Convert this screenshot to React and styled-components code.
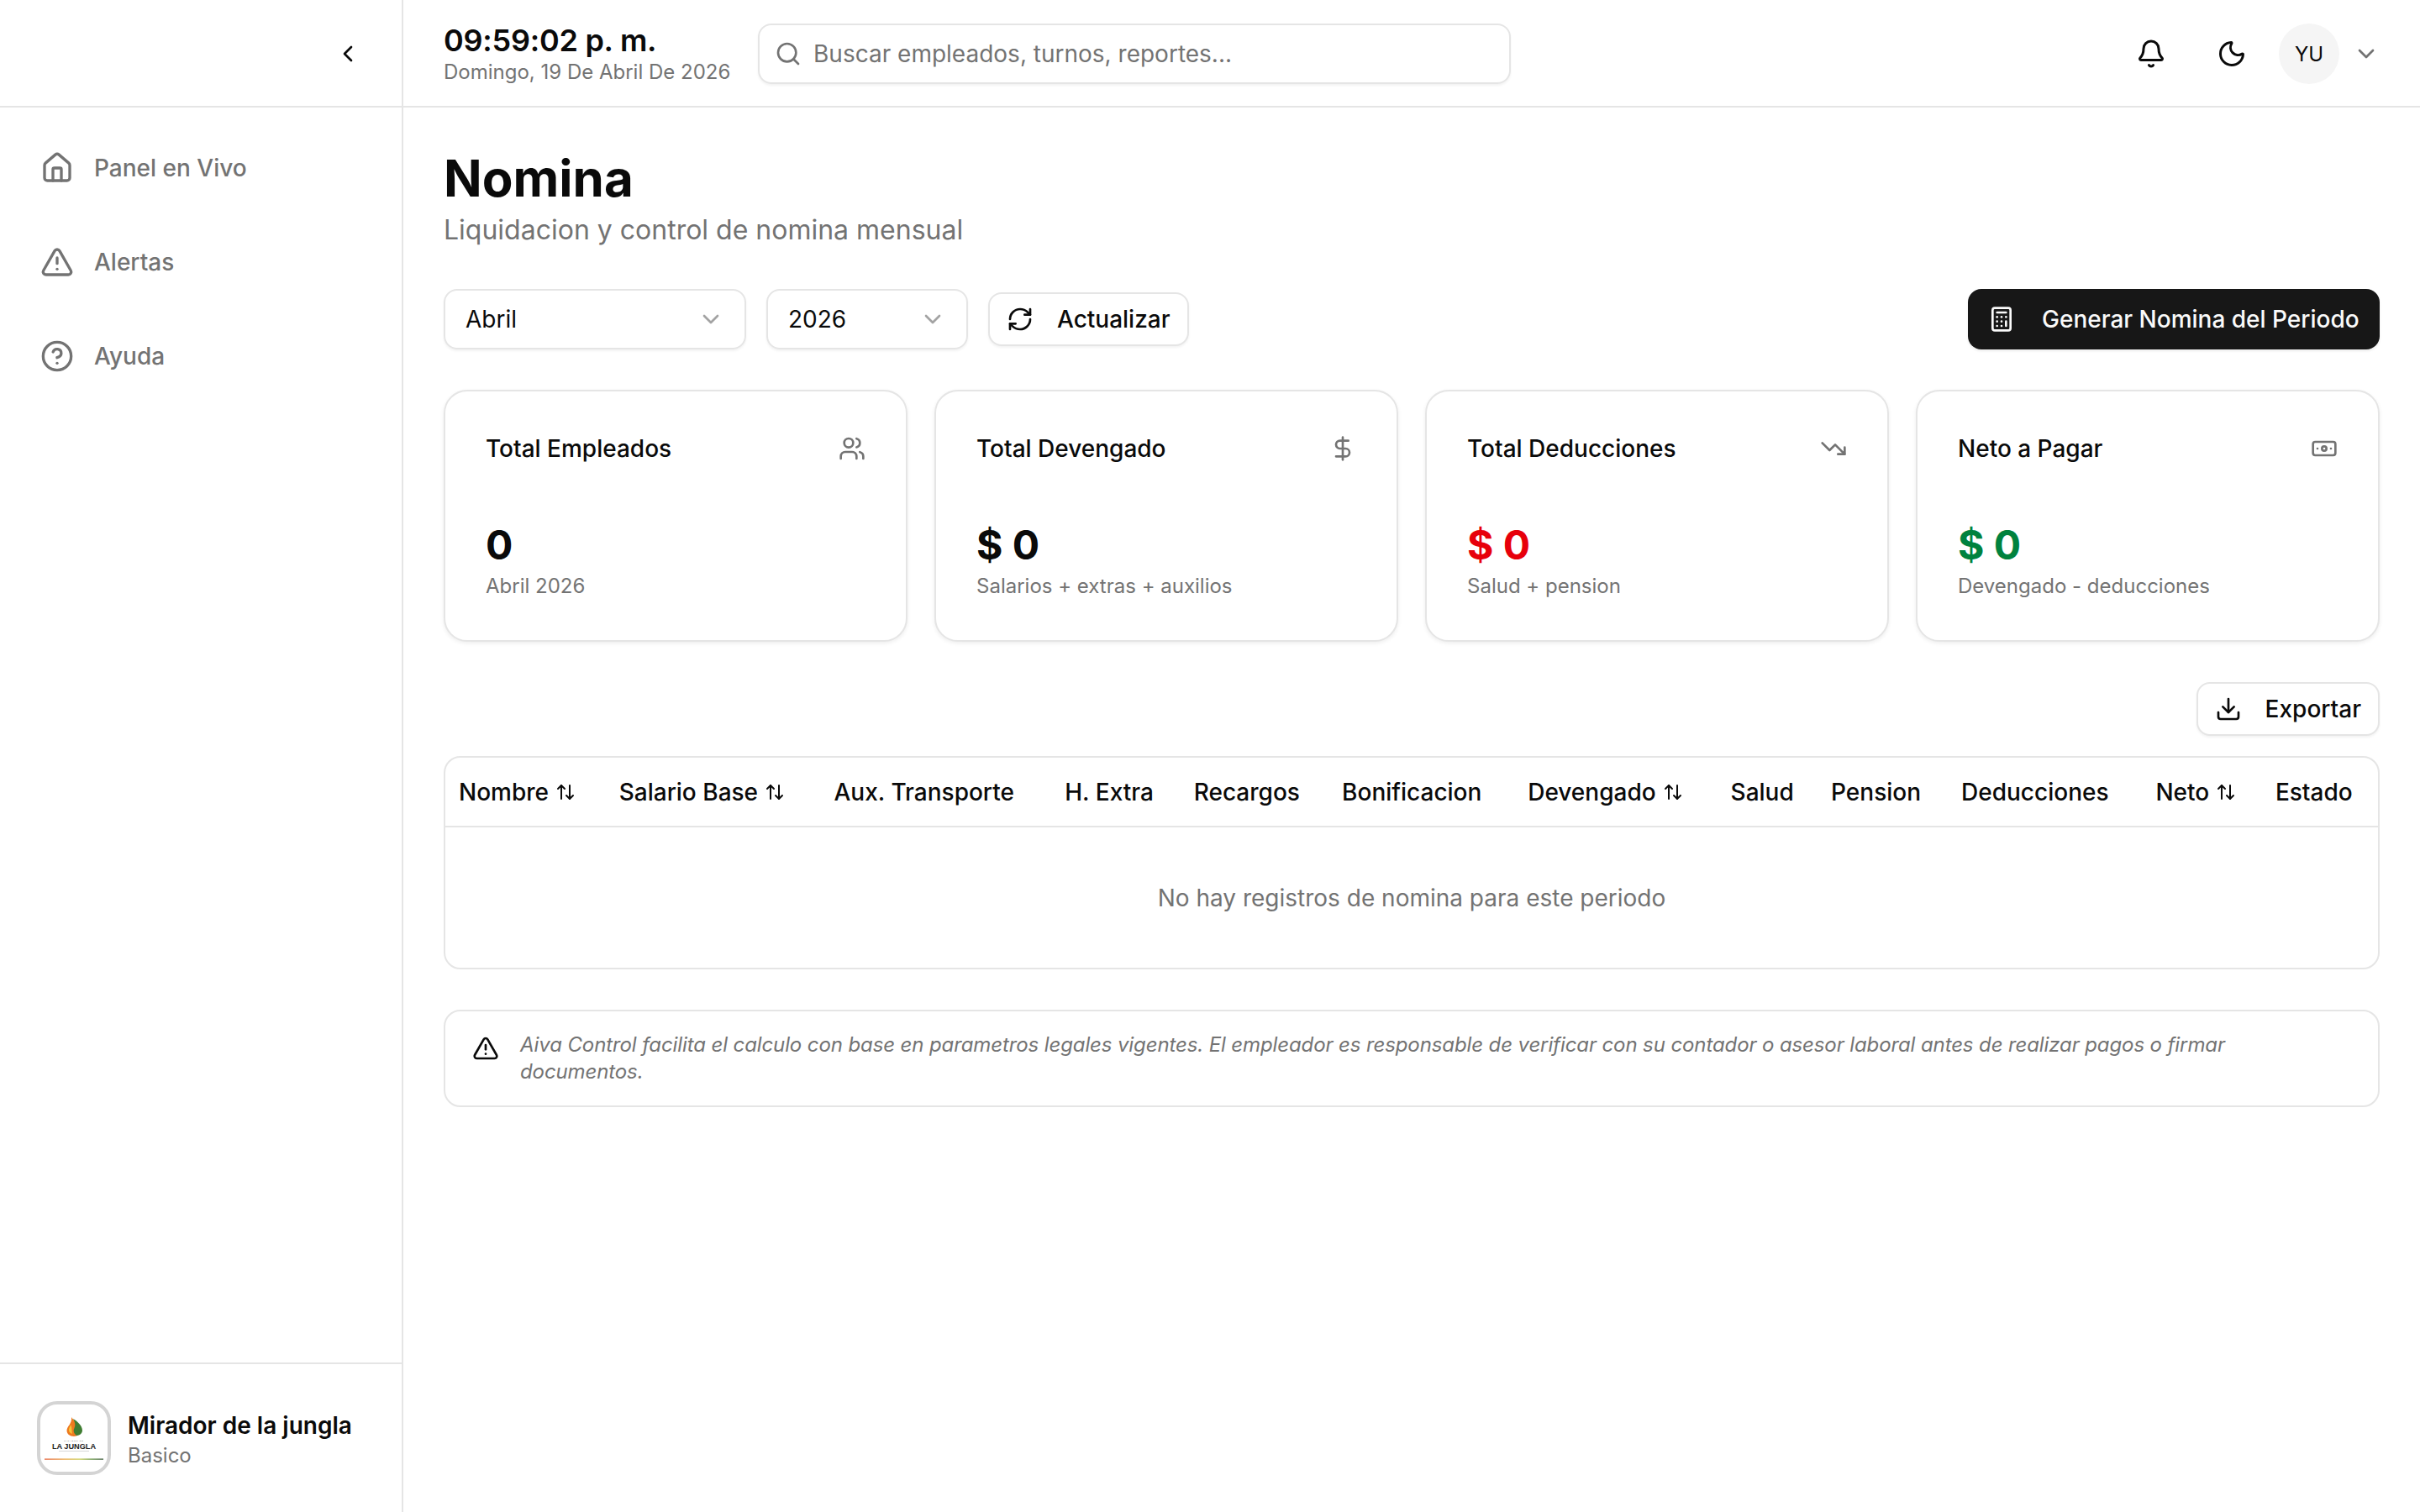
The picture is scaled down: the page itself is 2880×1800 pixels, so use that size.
import React from "react";
import styled, { createGlobalStyle } from "styled-components";
import {
  ArrowUpDown, Banknote, Bell, Calculator, ChevronDown, ChevronLeft, CircleHelp, DollarSign, Download,
  House, Moon, RefreshCw, Search, TrendingDown, TriangleAlert, Users,
} from "lucide-react";

const Global = createGlobalStyle`
  * { box-sizing: border-box; }
  html, body { margin: 0; padding: 0; background: #fff; }
  body { font-family: Inter, "Liberation Sans", sans-serif; color: #0a0a0a; }
`;

const Shell = styled.div`display: flex; width: 2880px; height: 1800px; overflow: hidden; background: #fff;`;
const Sidebar = styled.aside`width: 480px; flex: none; display: flex; flex-direction: column; border-right: 2px solid #e5e5e5;`;
const SideTop = styled.div`height: 128px; flex: none; display: flex; align-items: center; justify-content: flex-end; padding: 2px 48px 0 0; border-bottom: 2px solid #e5e5e5;`;
const Nav = styled.nav`flex: 1; display: flex; flex-direction: column; gap: 32px; padding: 32px 48px;`;
const NavItem = styled.a`display: flex; align-items: center; gap: 24px; height: 80px; color: #737373; font-size: 28px; font-weight: 500;`;
const SideFoot = styled.div`height: 178px; flex: none; display: flex; align-items: center; gap: 20px; padding: 0 44px; border-top: 2px solid #e5e5e5;`;
const LogoBox = styled.div`width: 88px; height: 88px; flex: none; border: 4px solid #d4d4d4; border-radius: 24px; background: #fff; display: flex; overflow: hidden;`;
const OrgText = styled.div`margin-top: 4px;`;
const OrgName = styled.div`font-size: 28px; line-height: 36px; font-weight: 600; white-space: nowrap;`;
const OrgPlan = styled.div`font-size: 24px; line-height: 32px; color: #737373; margin-top: 2px;`;

const Main = styled.div`flex: 1; min-width: 0; display: flex; flex-direction: column;`;
const TopBar = styled.header`height: 128px; flex: none; display: flex; align-items: center; gap: 32px; padding: 2px 48px 0; border-bottom: 2px solid #e5e5e5;`;
const Clock = styled.div`width: 342px; flex: none;`;
const ClockTime = styled.div`font-size: 36px; line-height: 44px; font-weight: 600; letter-spacing: -0.25px; margin-top: -1px;`;
const ClockDate = styled.div`font-size: 24px; line-height: 32px; color: #737373; white-space: nowrap;`;
const SearchBox = styled.div`width: 896px; height: 72px; display: flex; align-items: center; gap: 14px; padding: 0 18px; border: 2px solid #e5e5e5; border-radius: 16px; box-shadow: 0 2px 3px rgba(0,0,0,.05); color: #737373; font-size: 28px;`;
const TopRight = styled.div`margin-left: auto; display: flex; align-items: center;`;
const IconBtn = styled.button`width: 72px; height: 72px; margin-right: ${(p) => p.$mr}px; border: 0; padding: 0; background: none; color: #0a0a0a; display: flex; align-items: center; justify-content: center;`;
const Avatar = styled.div`width: 72px; height: 72px; border-radius: 50%; background: #f5f5f5; display: flex; align-items: center; justify-content: center; font-size: 24px; margin-right: 16px;`;

const Content = styled.main`padding: 48px; display: flex; flex-direction: column;`;
const Title = styled.h1`margin: 0; font-size: 60px; line-height: 72px; font-weight: 700;`;
const Subtitle = styled.p`margin: 0; padding-top: 4px; font-size: 32px; line-height: 44px; color: #737373;`;
const Controls = styled.div`margin-top: 48px; height: 72px; display: flex; align-items: center; gap: 24px;`;
const SelectBox = styled.div`width: ${(p) => p.$w}px; height: 72px; display: flex; align-items: center; justify-content: space-between; padding: 0 24px; border: 2px solid #e5e5e5; border-radius: 16px; box-shadow: 0 2px 3px rgba(0,0,0,.05); font-size: 28px; color: #a3a3a3;`;
const SelectValue = styled.span`color: #0a0a0a;`;
const OutlineBtn = styled.button`height: 64px; display: flex; align-items: center; gap: 28px; padding: 0 20px; border: 2px solid #e5e5e5; border-radius: 16px; background: #fff; box-shadow: 0 2px 3px rgba(0,0,0,.05); font: 500 28px Inter, sans-serif; color: #0a0a0a;`;
const PrimaryBtn = styled.button`margin-left: auto; height: 72px; width: 490px; display: flex; align-items: center; gap: 32px; padding: 0 24px; border: 0; border-radius: 16px; background: #171717; color: #fafafa; box-shadow: 0 2px 3px rgba(0,0,0,.08); font: 500 28px Inter, sans-serif; white-space: nowrap;`;

const Cards = styled.section`margin-top: 48px; display: grid; grid-template-columns: repeat(4, 1fr); gap: 32px;`;
const Card = styled.article`height: 300px; padding: 48px; border: 2px solid #e5e5e5; border-radius: 28px; background: #fff; box-shadow: 0 2px 5px rgba(0,0,0,.07);`;
const CardHead = styled.div`height: 40px; display: flex; align-items: center; justify-content: space-between; color: #737373;`;
const CardTitle = styled.span`font-size: 28px; font-weight: 500; color: #0a0a0a;`;
const CardValue = styled.div`margin-top: 63px; font-size: 48px; line-height: 64px; font-weight: 700; color: ${(p) => p.$c};`;
const CardSub = styled.div`margin-top: 1px; font-size: 24px; line-height: 32px; color: #737373;`;

const ExportRow = styled.div`margin-top: 48px; display: flex; justify-content: flex-end;`;
const TableWrap = styled.div`margin-top: 24px; border: 2px solid #e5e5e5; border-radius: 20px; overflow: hidden;`;
const Table = styled.table`width: 100%; border-collapse: collapse;`;
const Th = styled.th`height: 82px; padding: 0 16px; text-align: left; white-space: nowrap; font-size: 28px; font-weight: 500; color: #0a0a0a; border-bottom: 2px solid #e5e5e5;`;
const SortLabel = styled.span`display: inline-flex; align-items: center; gap: 8px;`;
const Empty = styled.td`height: 168px; text-align: center; font-size: 28px; color: #737373;`;
const Notice = styled.aside`margin-top: 48px; display: flex; gap: 25px; padding: 24px 32px; border: 2px solid #e5e5e5; border-radius: 20px; background: #fff; color: #0a0a0a;`;
const NoticeIcon = styled.span`flex: none; margin-top: 4px; height: 32px;`;
const NoticeText = styled.p`margin: 0; font-size: 24px; line-height: 32px; font-style: italic; letter-spacing: -0.11px; color: #737373;`;

const Logo = () => (
  <svg viewBox="0 0 80 80" width="80" height="80" role="img" aria-label="Mirador de la Jungla">
    <defs>
      <linearGradient id="ln" x1="0" x2="1">
        <stop offset="0" stopColor="#e4572e" /><stop offset=".35" stopColor="#e8a23a" /><stop offset=".6" stopColor="#c5c94a" /><stop offset=".8" stopColor="#5f8f3c" /><stop offset="1" stopColor="#2e4d2e" />
      </linearGradient>
    </defs>
    <path d="M37 15C39 19 47 22 48 30C48.5 35 44 38 40 38C35 38 31.5 35 31.5 31C31.5 26 38 23 37 15Z" fill="#ee7a1f" />
    <path d="M39 17C44 20 50 25 50 31C50 34 47 37 43 37C39.5 34 39 31 40.5 28C42 25 41.5 21 39 17Z" fill="#3f7d32" />
    <path d="M36 24C38 27 37 31 38 35C35 34 33.5 32 34 29.5C34.5 27 36 26 36 24Z" fill="#f6c63a" />
    <text x="40" y="43.5" textAnchor="middle" fontFamily="'Liberation Sans', sans-serif" fontSize="2.4" letterSpacing="0.8" fill="#555">MIRADOR DE</text>
    <text x="40" y="52.5" textAnchor="middle" fontFamily="'Liberation Sans', sans-serif" fontWeight="700" fontSize="9.2" fill="#222">LA JUNGLA</text>
    <rect x="22" y="55" width="36" height="0.6" fill="#bbb" />
    <rect x="5" y="64.5" width="70" height="1.2" fill="url(#ln)" />
  </svg>
);

const columns = [
  ["Nombre", true], ["Salario Base", true], ["Aux. Transporte"], ["H. Extra"], ["Recargos"], ["Bonificacion"],
  ["Devengado", true], ["Salud"], ["Pension"], ["Deducciones"], ["Neto", true], ["Estado"],
];

const cards = [
  { title: "Total Empleados", Icon: Users, value: "0", sub: "Abril 2026", c: "#0a0a0a" },
  { title: "Total Devengado", Icon: DollarSign, value: "$ 0", sub: "Salarios + extras + auxilios", c: "#0a0a0a" },
  { title: "Total Deducciones", Icon: TrendingDown, value: "$ 0", sub: "Salud + pension", c: "#e7000b" },
  { title: "Neto a Pagar", Icon: Banknote, value: "$ 0", sub: "Devengado - deducciones", c: "#00823e" },
];

export default function App() {
  return (
    <Shell>
      <Global />
      <Sidebar>
        <SideTop><ChevronLeft size={32} color="#0a0a0a" strokeWidth={2} /></SideTop>
        <Nav>
          <NavItem><House size={40} strokeWidth={2} />Panel en Vivo</NavItem>
          <NavItem><TriangleAlert size={40} strokeWidth={2} />Alertas</NavItem>
          <NavItem><CircleHelp size={40} strokeWidth={2} />Ayuda</NavItem>
        </Nav>
        <SideFoot>
          <LogoBox><Logo /></LogoBox>
          <OrgText>
            <OrgName>Mirador de la jungla</OrgName>
            <OrgPlan>Basico</OrgPlan>
          </OrgText>
        </SideFoot>
      </Sidebar>
      <Main>
        <TopBar>
          <Clock>
            <ClockTime>09:59:02 p. m.</ClockTime>
            <ClockDate>Domingo, 19 De Abril De 2026</ClockDate>
          </Clock>
          <SearchBox><Search size={32} strokeWidth={2} />Buscar empleados, turnos, reportes...</SearchBox>
          <TopRight>
            <IconBtn $mr={24}><Bell size={36} strokeWidth={2} /></IconBtn>
            <IconBtn $mr={20}><Moon size={36} strokeWidth={2} /></IconBtn>
            <Avatar>YU</Avatar>
            <ChevronDown size={32} color="#737373" strokeWidth={2} />
          </TopRight>
        </TopBar>
        <Content>
          <Title>Nomina</Title>
          <Subtitle>Liquidacion y control de nomina mensual</Subtitle>
          <Controls>
            <SelectBox $w={360}><SelectValue>Abril</SelectValue><ChevronDown size={32} strokeWidth={2} /></SelectBox>
            <SelectBox $w={240}><SelectValue>2026</SelectValue><ChevronDown size={32} strokeWidth={2} /></SelectBox>
            <OutlineBtn><RefreshCw size={32} strokeWidth={2} />Actualizar</OutlineBtn>
            <PrimaryBtn><Calculator size={32} strokeWidth={2} />Generar Nomina del Periodo</PrimaryBtn>
          </Controls>
          <Cards>
            {cards.map(({ title, Icon, value, sub, c }) => (
              <Card key={title}>
                <CardHead><CardTitle>{title}</CardTitle><Icon size={32} strokeWidth={2} /></CardHead>
                <CardValue $c={c}>{value}</CardValue>
                <CardSub>{sub}</CardSub>
              </Card>
            ))}
          </Cards>
          <ExportRow>
            <OutlineBtn><Download size={32} strokeWidth={2} />Exportar</OutlineBtn>
          </ExportRow>
          <TableWrap>
            <Table>
              <thead>
                <tr>
                  {columns.map(([name, sortable]) => (
                    <Th key={name}>
                      <SortLabel>{name}{sortable && <ArrowUpDown size={24} strokeWidth={2} />}</SortLabel>
                    </Th>
                  ))}
                </tr>
              </thead>
              <tbody>
                <tr><Empty colSpan={12}>No hay registros de nomina para este periodo</Empty></tr>
              </tbody>
            </Table>
          </TableWrap>
          <Notice>
            <NoticeIcon><TriangleAlert size={32} strokeWidth={2} /></NoticeIcon>
            <NoticeText>Aiva Control facilita el calculo con base en parametros legales vigentes. El empleador es responsable de verificar con su contador o asesor laboral antes de realizar pagos o firmar documentos.</NoticeText>
          </Notice>
        </Content>
      </Main>
    </Shell>
  );
}
